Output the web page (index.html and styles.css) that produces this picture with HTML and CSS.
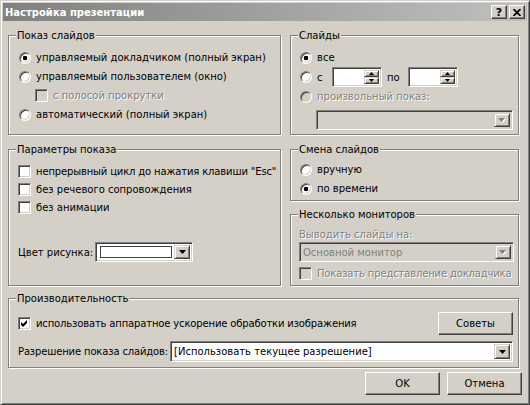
FILE: index.html
```html
<!DOCTYPE html>
<html lang="ru">
<head>
    <meta charset="UTF-8">
    <title>Настройка презентации</title>
    <link rel="stylesheet" href="styles.css">
</head>
<body>
    <div class="window">
        <div class="titlebar">
            <span class="title">Настройка презентации</span>
            <div class="title-buttons">
                <span class="title-btn">?</span>
                <span class="title-btn">
                    <svg width="8" height="7" viewBox="0 0 8 7"><path d="M0.5 0 L7.5 7 M7.5 0 L0.5 7" stroke="#000" stroke-width="1.7"/></svg>
                </span>
            </div>
        </div>

        <div class="dialog">
            <div class="columns">
                <div class="column">
                    <div class="group show-type">
                        <div class="group-title">Показ слайдов</div>
                        <div class="rows">
                            <div class="row"><span class="radio checked"></span>управляемый докладчиком (полный экран)</div>
                            <div class="row"><span class="radio"></span>управляемый пользователем (окно)</div>
                            <div class="row indent disabled"><span class="check off"></span>с полосой прокрутки</div>
                            <div class="row"><span class="radio"></span>автоматический (полный экран)</div>
                        </div>
                    </div>

                    <div class="group show-options">
                        <div class="group-title">Параметры показа</div>
                        <div class="rows">
                            <div class="row short tight"><span class="check"></span>непрерывный цикл до нажатия клавиши "Esc"</div>
                            <div class="row short"><span class="check"></span>без речевого сопровождения</div>
                            <div class="row short"><span class="check"></span>без анимации</div>
                            <div class="row color-row">
                                <span class="color-label">Цвет рисунка:</span>
                                <div class="field color-field">
                                    <span class="swatch"></span>
                                    <span class="drop">
                                        <svg width="7" height="4" viewBox="0 0 7 4"><path d="M0 0 H7 L3.5 4 Z" fill="#000"/></svg>
                                    </span>
                                </div>
                            </div>
                        </div>
                    </div>
                </div>

                <div class="column">
                    <div class="group slides">
                        <div class="group-title">Слайды</div>
                        <div class="rows">
                            <div class="row"><span class="radio checked"></span>все</div>
                            <div class="row range-row">
                                <span class="radio"></span><span class="range-label">с</span>
                                <div class="field spin">
                                    <span class="spin-buttons">
                                        <span class="spin-btn"><svg width="5" height="3" viewBox="0 0 5 3"><path d="M0 3 H5 L2.5 0 Z" fill="#000"/></svg></span>
                                        <span class="spin-btn"><svg width="5" height="3" viewBox="0 0 5 3"><path d="M0 0 H5 L2.5 3 Z" fill="#000"/></svg></span>
                                    </span>
                                </div>
                                <span class="range-to">по</span>
                                <div class="field spin">
                                    <span class="spin-buttons">
                                        <span class="spin-btn"><svg width="5" height="3" viewBox="0 0 5 3"><path d="M0 3 H5 L2.5 0 Z" fill="#000"/></svg></span>
                                        <span class="spin-btn"><svg width="5" height="3" viewBox="0 0 5 3"><path d="M0 0 H5 L2.5 3 Z" fill="#000"/></svg></span>
                                    </span>
                                </div>
                            </div>
                            <div class="row disabled"><span class="radio off"></span>произвольный показ:</div>
                            <div class="field select custom-show off">
                                <span class="select-text"></span>
                                <span class="drop">
                                    <svg width="8" height="5" viewBox="0 0 8 5"><path d="M1 1 H8 L4.5 5 Z" fill="#fff"/><path d="M0 0 H7 L3.5 4 Z" fill="#808080"/></svg>
                                </span>
                            </div>
                        </div>
                    </div>

                    <div class="group advance">
                        <div class="group-title">Смена слайдов</div>
                        <div class="rows">
                            <div class="row"><span class="radio"></span>вручную</div>
                            <div class="row"><span class="radio checked"></span>по времени</div>
                        </div>
                    </div>

                    <div class="group monitors">
                        <div class="group-title">Несколько мониторов</div>
                        <div class="rows">
                            <div class="monitor-label disabled">Выводить слайды на:</div>
                            <div class="field select monitor-select off">
                                <span class="select-text">Основной монитор</span>
                                <span class="drop">
                                    <svg width="8" height="5" viewBox="0 0 8 5"><path d="M1 1 H8 L4.5 5 Z" fill="#fff"/><path d="M0 0 H7 L3.5 4 Z" fill="#808080"/></svg>
                                </span>
                            </div>
                            <div class="row presenter disabled tight"><span class="check off"></span>Показать представление докладчика</div>
                        </div>
                    </div>
                </div>
            </div>

            <div class="group perf">
                <div class="group-title">Производительность</div>
                <div class="rows">
                    <div class="row accel-row">
                        <span class="check">
                            <svg width="7" height="7" viewBox="0 0 7 7"><path d="M0 2 L2 4 L6 0 V3 L2 7 L0 5 Z" fill="#000"/></svg>
                        </span>
                        <span class="tight">использовать аппаратное ускорение обработки изображения</span>
                        <span class="button tips">Советы</span>
                    </div>
                    <div class="row resolution-row">
                        <span class="resolution-label">Разрешение показа слайдов:</span>
                        <div class="field select resolution-select">
                            <span class="select-text">[Использовать текущее разрешение]</span>
                            <span class="drop">
                                <svg width="7" height="4" viewBox="0 0 7 4"><path d="M0 0 H7 L3.5 4 Z" fill="#000"/></svg>
                            </span>
                        </div>
                    </div>
                </div>
            </div>

            <div class="actions">
                <span class="button">OK</span>
                <span class="button">Отмена</span>
            </div>
        </div>
    </div>
</body>
</html>
```

FILE: styles.css
```css
body {
    margin: 0;
    font-family: "DejaVu Sans", sans-serif;
    font-size: 10px;
    color: #000;
    background: #d4d0c8;
}
.window {
    width: 530px;
    height: 405px;
    box-sizing: border-box;
    padding: 2px;
    background: #d4d0c8;
    border: 1px solid;
    border-color: #d4d0c8 #404040 #404040 #d4d0c8;
    box-shadow: inset 1px 1px 0 #fff, inset -1px -1px 0 #808080;
}

/* title bar */
.titlebar {
    height: 18px;
    display: flex;
    align-items: center;
    justify-content: space-between;
    padding: 0 2px;
    background: linear-gradient(to right, #808080, #c0c0c0);
}
.title {
    color: #fff;
    font-weight: bold;
    font-size: 10px;
}
.title-buttons {
    display: flex;
    gap: 2px;
}
.title-btn {
    width: 16px;
    height: 14px;
    box-sizing: border-box;
    display: flex;
    align-items: center;
    justify-content: center;
    border: 1px solid;
    border-color: #fff #404040 #404040 #fff;
    box-shadow: inset -1px -1px 0 #808080;
    background: #d4d0c8;
    font-weight: bold;
    font-size: 11px;
    line-height: 1;
}

/* dialog body */
.dialog {
    padding: 14px 5px 0 5px;
}
.columns {
    display: grid;
    grid-template-columns: 273px 229px;
    column-gap: 9px;
}
.column {
    display: flex;
    flex-direction: column;
}
.group {
    box-sizing: border-box;
    border: 1px solid #808080;
    box-shadow: 1px 1px 0 #fff, inset 1px 1px 0 #fff;
}
.group-title {
    display: table;
    margin: -7px 0 0 7px;
    padding: 0 1px;
    line-height: 13px;
    background: #d4d0c8;
}
.rows {
    padding: 6px 4px 0 9px;
}
.slides .rows,
.advance .rows,
.monitors .rows {
    padding-left: 8px;
}
.show-type { height: 100px; }
.show-options { height: 137px; margin-top: 14px; }
.slides { height: 100px; }
.advance { height: 52px; margin-top: 14px; }
.advance .rows { padding-top: 4px; }
.monitors { height: 72px; margin-top: 13px; }
.monitors .rows { padding-top: 7px; }
.perf {
    width: 511px;
    height: 70px;
    margin-top: 12px;
}
.perf .rows { padding-right: 5px; }

.row {
    display: flex;
    align-items: center;
    height: 19px;
    white-space: nowrap;
}
.row.short { height: 18px; }
.row.indent { padding-left: 17px; }
.tight { letter-spacing: -0.15px; }
.disabled {
    color: #808080;
    text-shadow: 1px 1px 0 #fff;
}

/* radio buttons and check boxes */
.radio {
    flex: none;
    width: 12px;
    height: 12px;
    box-sizing: border-box;
    margin: 0 5px 0 1px;
    border-radius: 50%;
    border: 1px solid;
    border-color: #808080 #fff #fff #808080;
    box-shadow: inset 1px 1px 0 #404040, inset -1px -1px 0 #d4d0c8;
    background: #fff;
}
.radio.checked {
    background: radial-gradient(circle, #000 2px, #fff 2.6px);
}
.check {
    flex: none;
    width: 13px;
    height: 13px;
    box-sizing: border-box;
    margin-right: 5px;
    display: flex;
    align-items: center;
    justify-content: center;
    border: 1px solid;
    border-color: #808080 #fff #fff #808080;
    box-shadow: inset 1px 1px 0 #404040, inset -1px -1px 0 #d4d0c8;
    background: #fff;
}
.radio.off,
.check.off {
    background: #d4d0c8;
}

/* sunken fields */
.field {
    box-sizing: border-box;
    display: flex;
    align-items: stretch;
    padding: 2px;
    border: 1px solid;
    border-color: #808080 #fff #fff #808080;
    box-shadow: inset 1px 1px 0 #404040, inset -1px -1px 0 #d4d0c8;
    background: #fff;
}
.field.off {
    background: #d4d0c8;
}
.drop {
    flex: none;
    width: 16px;
    margin-left: auto;
    box-sizing: border-box;
    display: flex;
    align-items: center;
    justify-content: center;
    border: 1px solid;
    border-color: #d4d0c8 #404040 #404040 #d4d0c8;
    box-shadow: inset 1px 1px 0 #fff, inset -1px -1px 0 #808080;
    background: #d4d0c8;
}
.select {
    height: 20px;
}
.select-text {
    display: flex;
    align-items: center;
    padding-left: 1px;
    white-space: nowrap;
}
.off .select-text {
    color: #808080;
}

.range-row { height: 20px; }
.range-label { width: 15px; }
.range-to { width: 21px; margin-left: 5px; }
.spin {
    width: 50px;
    height: 20px;
}
.spin-buttons {
    margin-left: auto;
    width: 15px;
    display: flex;
    flex-direction: column;
}
.spin-btn {
    flex: 1;
    box-sizing: border-box;
    display: flex;
    align-items: center;
    justify-content: center;
    border: 1px solid;
    border-color: #d4d0c8 #404040 #404040 #d4d0c8;
    box-shadow: inset 1px 1px 0 #fff, inset -1px -1px 0 #808080;
    background: #d4d0c8;
}
.custom-show {
    width: 197px;
    margin: 4px 0 0 17px;
}

.color-row {
    height: 20px;
    margin-top: 26px;
}
.color-label { width: 77px; }
.color-field {
    width: 98px;
    height: 20px;
}
.swatch {
    flex: 1;
    margin: 1px 2px 1px 2px;
    border: 1px solid #404040;
    background: #fff;
}

.monitor-label {
    line-height: 13px;
}
.monitor-select {
    width: 215px;
    margin-top: 1px;
}
.row.presenter {
    height: 15px;
    margin-top: 4px;
}

/* performance */
.accel-row { height: 24px; }
.resolution-row {
    height: 21px;
    margin-top: 6px;
}
.resolution-label {
    letter-spacing: -0.15px;
}
.resolution-select {
    width: 343px;
    height: 21px;
    margin-left: auto;
}

/* push buttons */
.button {
    width: 75px;
    height: 23px;
    box-sizing: border-box;
    display: flex;
    align-items: center;
    justify-content: center;
    border: 1px solid;
    border-color: #fff #404040 #404040 #fff;
    box-shadow: inset -1px -1px 0 #808080;
    background: #d4d0c8;
}
.tips {
    width: 75px;
    margin-left: auto;
}
.actions {
    display: flex;
    justify-content: flex-end;
    gap: 7px;
    margin-top: 4px;
}
```
